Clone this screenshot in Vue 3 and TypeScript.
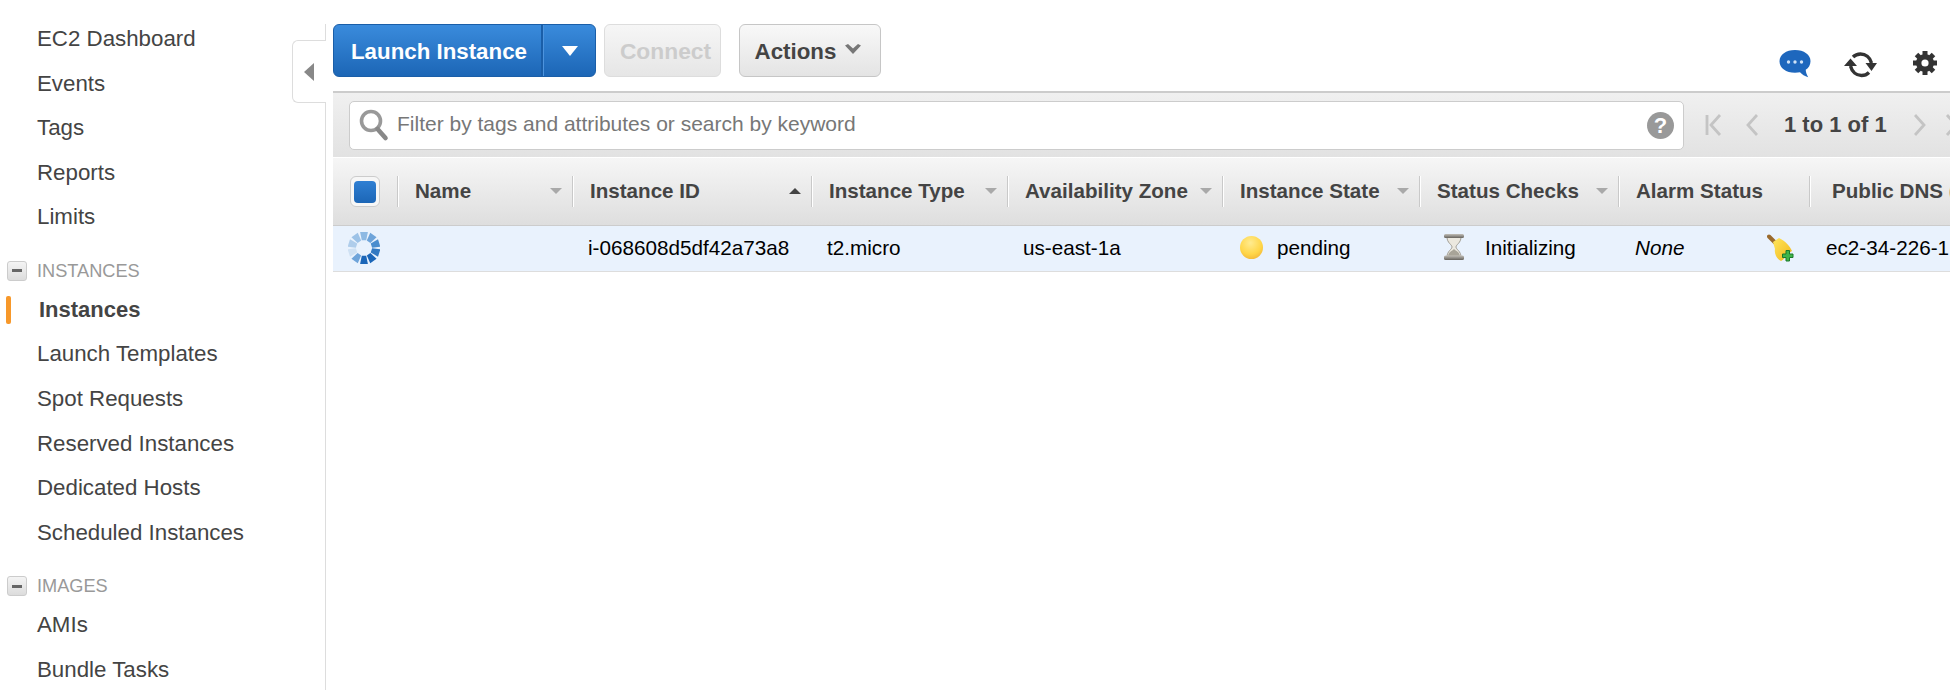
<template>
  <div class="console">
    <aside class="sidebar">
      <nav class="nav">
        <a v-for="item in topLinks" :key="item" class="nav-item">{{ item }}</a>
        <template v-for="group in groups" :key="group.title">
          <div class="nav-head">
            <span class="minus"><i></i></span>
            {{ group.title }}
          </div>
          <a
            v-for="item in group.items"
            :key="item"
            class="nav-item"
            :class="{ active: item === 'Instances' }"
          >{{ item }}</a>
        </template>
      </nav>
      <div class="collapse-tab"><i></i></div>
    </aside>

    <main class="main">
      <div class="actions">
        <button class="btn primary">
          <span class="primary-label">Launch Instance</span>
          <span class="primary-caret"><i></i></span>
        </button>
        <button class="btn disabled">Connect</button>
        <button class="btn plain">
          Actions
          <svg width="16" height="11" viewBox="0 0 16 11"><path d="M0 1.500L3 0l5 4.500L13 0l3 1.500L8 10z" fill="#777" /></svg>
        </button>

        <div class="tools">
          <svg class="chat" width="32" height="28" viewBox="0 0 32 28">
            <path d="M16 0c9 0 15.500 4.700 15.500 11.200 0 3.600-1.800 6.600-4.800 8.600.2 2.600 1 4.900 2.500 7.400-3.500-1-6.200-2.600-8.200-4.900-1.500.3-3.100.4-5 .4C7 22.700.5 18 .5 11.200.5 4.700 7 0 16 0z" fill="#1e67bd" />
            <circle cx="9.500" cy="12" r="1.700" fill="#cfe2f7" />
            <circle cx="16" cy="12" r="1.700" fill="#cfe2f7" />
            <circle cx="22.500" cy="12" r="1.700" fill="#cfe2f7" />
          </svg>
          <svg class="refresh" width="33" height="26" viewBox="0 0 33 26">
            <path d="M6.500 14c1.500 6 6 9.500 11 9.500 3 0 5.500-1 7.500-3M27.500 11c-1.500-6-6-9-11-9-3 0-5.500 1-7.500 3" fill="none" stroke="#333" stroke-width="3.400" />
            <path d="M0 14h13L6.500 6.500zM21.500 11h11.500L27.500 19z" fill="#333" />
          </svg>
          <svg class="gear" width="26" height="26" viewBox="0 0 26 26">
            <line
              v-for="a in [0, 45, 90, 135]"
              :key="a"
              x1="13"
              y1="1"
              x2="13"
              y2="25"
              stroke="#333"
              stroke-width="5"
              :transform="`rotate(${a} 13 13)`"
            />
            <circle cx="13" cy="13" r="9" fill="#333" />
            <circle cx="13" cy="13" r="3.600" fill="#fff" />
          </svg>
        </div>
      </div>

      <div class="filter-bar">
        <div class="search">
          <svg width="30" height="34" viewBox="0 0 30 34">
            <circle cx="12" cy="13" r="9.500" fill="#fff" stroke="#999" stroke-width="3.600" />
            <path d="M18.500 21l8 9" stroke="#888" stroke-width="4.600" stroke-linecap="round" />
          </svg>
          <span class="search-text">Filter by tags and attributes or search by keyword</span>
          <span class="help">?</span>
        </div>
        <div class="pager">
          <svg width="17" height="22" viewBox="0 0 17 22"><path d="M2 1v20M15 1L6 11l9 10" fill="none" stroke="#c4c4c4" stroke-width="2.800" /></svg>
          <svg class="prev" width="12" height="22" viewBox="0 0 12 22"><path d="M11 1L2 11l9 10" fill="none" stroke="#c4c4c4" stroke-width="2.800" /></svg>
          <span class="pager-text">1 to 1 of 1</span>
          <svg class="next" width="12" height="22" viewBox="0 0 12 22"><path d="M1 1l9 10-9 10" fill="none" stroke="#c4c4c4" stroke-width="2.800" /></svg>
          <svg class="last" width="17" height="22" viewBox="0 0 17 22"><path d="M2 1l9 10-9 10M15 1v20" fill="none" stroke="#c4c4c4" stroke-width="2.800" /></svg>
        </div>
      </div>

      <div class="grid head">
        <div class="check-cell"><span class="check"><i></i></span></div>
        <div v-for="col in columns" :key="col.label" class="th" :class="{ wide: col.label === 'Public DNS (IPv4)' }">
          <span class="th-label">{{ col.label }}</span>
          <span v-if="col.sort" class="sort" :class="col.sort"></span>
        </div>
      </div>

      <div class="grid row">
        <div class="spin-cell">
          <svg width="32" height="32" viewBox="-16 -16 32 32">
            <path
              v-for="(color, i) in spinner"
              :key="i"
              d="M-3.900 -16L3.900 -16L2.200 -7.800L-2.200 -7.800Z"
              :fill="color"
              :transform="`rotate(${i * 36})`"
            />
          </svg>
        </div>
        <div class="td"></div>
        <div class="td">i-068608d5df42a73a8</div>
        <div class="td">t2.micro</div>
        <div class="td">us-east-1a</div>
        <div class="td state">
          <span class="ball"></span>
          pending
        </div>
        <div class="td status">
          <svg width="22" height="26" viewBox="0 0 22 26">
            <defs>
              <linearGradient id="cap" x1="0" y1="0" x2="0" y2="1">
                <stop offset="0" stop-color="#c2bfb8" />
                <stop offset="1" stop-color="#66635d" />
              </linearGradient>
            </defs>
            <path d="M4 3c0 6 5 7.500 5 10s-5 4-5 10h14c0-6-5-7.500-5-10s5-4 5-10z" fill="#ebe8df" stroke="#a09d94" stroke-width="1" />
            <path d="M5 22c.5-4 4-5 6-7 2 2 5.500 3 6 7z" fill="#a8a498" />
            <rect x="1" y="0" width="20" height="4" rx="1.500" fill="url(#cap)" />
            <rect x="1" y="21.500" width="20" height="4.500" rx="1.500" fill="url(#cap)" />
          </svg>
          Initializing
        </div>
        <div class="td alarm">
          <em>None</em>
          <svg class="broom" width="29" height="28" viewBox="0 0 29 28">
            <defs>
              <linearGradient id="bell" x1="0" y1="0" x2="1" y2="1">
                <stop offset="0" stop-color="#ffe65c" />
                <stop offset="0.7" stop-color="#f5c52e" />
                <stop offset="1" stop-color="#c98f1c" />
              </linearGradient>
            </defs>
            <path d="M2 2.500l6 6" stroke="#9a6a2c" stroke-width="4" stroke-linecap="round" />
            <path d="M6 8l6-4c6 3 11 8 13 13-5 3-7 8-11 10-4-2-7-7-6-12z" fill="url(#bell)" />
            <path d="M19 16.500h3.500v3.500h3.500v3.500h-3.500v3.500h-3.500v-3.500h-3.500v-3.500h3.500z" fill="#3fb54a" stroke="#1d7a2a" stroke-width="1" />
          </svg>
        </div>
        <div class="td dns">ec2-34-226-1</div>
      </div>
    </main>
  </div>
</template>

<script setup lang="ts">
interface Column {
  label: string
  sort?: 'down' | 'up'
}

const topLinks = ['EC2 Dashboard', 'Events', 'Tags', 'Reports', 'Limits']

const groups = [
  {
    title: 'INSTANCES',
    items: ['Instances', 'Launch Templates', 'Spot Requests', 'Reserved Instances', 'Dedicated Hosts', 'Scheduled Instances'],
  },
  { title: 'IMAGES', items: ['AMIs', 'Bundle Tasks'] },
]

const columns: Column[] = [
  { label: 'Name', sort: 'down' },
  { label: 'Instance ID', sort: 'up' },
  { label: 'Instance Type', sort: 'down' },
  { label: 'Availability Zone', sort: 'down' },
  { label: 'Instance State', sort: 'down' },
  { label: 'Status Checks', sort: 'down' },
  { label: 'Alarm Status' },
  { label: 'Public DNS (IPv4)' },
]

// clockwise from the top, the tail of the spinner fades out on the left
const spinner = ['#8db9e3', '#6ea4da', '#4a8dce', '#3279c2', '#1b66b8', '#1b66b8', '#6ea4da', '#cfe1f3', '#afcdeb', '#9cc2e7']
</script>

<style>
html,
body {
  overflow: hidden;
  background: #fff;
}
</style>

<style scoped>
.console {
  display: flex;
  height: 690px;
  width: 1950px;
  overflow: hidden;
  font-family: "Liberation Sans", Arial, sans-serif;
  color: #444;
  background: #fff;
}

.sidebar {
  position: relative;
  flex: none;
  width: 326px;
  box-sizing: border-box;
  margin-top: 24px;
  border-right: 1px solid #ddd;
}

.nav {
  display: flex;
  flex-direction: column;
  padding: 1px 0 0 37px;
}

.nav-item {
  position: relative;
  height: 28px;
  line-height: 28px;
  margin-bottom: 16.600px;
  font-size: 22.300px;
  white-space: nowrap;
}

.nav-item.active {
  font-weight: bold;
  font-size: 22px;
  padding-left: 2px;
}

.nav-item.active::before {
  content: "";
  position: absolute;
  left: -31px;
  top: 0;
  width: 5px;
  height: 28px;
  border-radius: 2px;
  background: #f7982a;
}

.nav-head {
  position: relative;
  height: 28px;
  line-height: 28px;
  margin: 8.900px 0 11px;
  font-size: 18.200px;
  color: #999;
}

.minus {
  position: absolute;
  left: -30px;
  top: 4px;
  width: 18px;
  height: 18px;
  border: 1px solid #ccc;
  border-radius: 3px;
  background: linear-gradient(#f4f4f4, #dcdcdc);
  display: flex;
  align-items: center;
  justify-content: center;
}

.minus i {
  width: 10px;
  height: 3px;
  background: #666;
}

.collapse-tab {
  position: absolute;
  left: 292px;
  top: 16px;
  width: 34px;
  height: 63px;
  box-sizing: border-box;
  border: 1px solid #ddd;
  border-right: 0;
  border-radius: 6px 0 0 6px;
  background: #fff;
  display: flex;
  align-items: center;
  padding-left: 11px;
}

.collapse-tab i {
  border-style: solid;
  border-width: 9px 10px 9px 0;
  border-color: transparent #888 transparent transparent;
}

.main {
  flex: 1;
  min-width: 0;
  padding-left: 7px;
  overflow: hidden;
}

.actions {
  display: flex;
  height: 91px;
  box-sizing: border-box;
  padding-top: 24px;
  gap: 8px;
}

.btn {
  height: 53px;
  box-sizing: border-box;
  border-radius: 6px;
  font-family: inherit;
  font-size: 22.300px;
  font-weight: bold;
  padding: 2px 0 0;
  display: flex;
  align-items: center;
}

.primary {
  width: 263px;
  padding: 0;
  border: 1px solid #1a5ea8;
  background: linear-gradient(#3a8bdc, #1c66b6);
  color: #fff;
}

.primary-label {
  width: 209px;
  height: 100%;
  line-height: 53px;
  text-align: left;
  padding-left: 17px;
  box-sizing: border-box;
  border-right: 2px solid #1a5ea8;
}

.primary-caret {
  flex: 1;
  height: 100%;
  display: flex;
  align-items: center;
  justify-content: center;
  border-left: 1px solid #4d94de;
}

.primary-caret i {
  border-style: solid;
  border-width: 10px 8.500px 0;
  border-color: #fff transparent transparent;
}

.disabled {
  width: 117px;
  justify-content: center;
  padding-left: 6px;
  border: 1px solid #ddd;
  background: linear-gradient(#f6f6f6, #e6e6e6);
  color: #ccc;
  font-size: 22.800px;
}

.plain {
  width: 142px;
  margin-left: 10px;
  padding-right: 4px;
  justify-content: center;
  gap: 9px;
  border: 1px solid #c6c6c6;
  background: linear-gradient(#f8f8f8, #e4e4e4);
  color: #444;
}

.plain svg {
  position: relative;
  top: -2px;
}

.tools {
  margin-left: auto;
  display: flex;
  align-items: flex-start;
  padding-top: 26px;
}

.chat {
  margin-right: 33px;
}

.refresh {
  margin-top: 2px;
  margin-right: 35px;
}

.gear {
  margin-right: 12px;
}

.filter-bar {
  display: flex;
  align-items: center;
  height: 66px;
  box-sizing: border-box;
  border-top: 2px solid #ccc;
  background: linear-gradient(#f0f0f0, #e2e2e2);
  padding-left: 16px;
}

.search {
  flex: none;
  width: 1335px;
  height: 49px;
  box-sizing: border-box;
  display: flex;
  align-items: center;
  padding: 0 9px 0 9px;
  background: #fff;
  border: 1px solid #ccc;
  border-radius: 5px;
}

.search-text {
  flex: 1;
  margin: 0 0 2px 8px;
  font-size: 21px;
  color: #777;
}

.help {
  width: 27px;
  height: 27px;
  border-radius: 50%;
  background: #999;
  color: #fff;
  font-size: 22px;
  font-weight: bold;
  line-height: 27px;
  text-align: center;
}

.pager {
  flex: none;
  display: flex;
  align-items: center;
  margin-left: 21px;
}

.prev {
  margin-left: 24px;
}

.pager-text {
  margin-left: 26px;
  font-size: 22px;
  font-weight: bold;
  white-space: nowrap;
}

.next {
  margin-left: 27px;
}

.last {
  margin-left: 19px;
}

.grid {
  display: grid;
  grid-template-columns: 64px 175px 239px 196px 215px 197px 199px 191px 220px;
  align-items: center;
}

.head {
  height: 69px;
  border-top: 1px solid #fff;
  border-bottom: 1px solid #ccc;
  box-sizing: border-box;
  background: linear-gradient(#f6f6f6, #dedede);
}

.check-cell {
  padding-left: 17px;
}

.check {
  display: flex;
  align-items: center;
  justify-content: center;
  width: 30px;
  height: 31px;
  box-sizing: border-box;
  border: 1px solid #ccc;
  border-radius: 6px;
  background: #f6f6f6;
}

.check i {
  width: 22px;
  height: 22px;
  border-radius: 4px;
  background: linear-gradient(#2f7fd3, #1c66b6);
}

.th {
  display: flex;
  align-items: center;
  justify-content: space-between;
  height: 31px;
  box-sizing: border-box;
  padding: 0 10px 2px 17px;
  border-left: 1px solid #c9c9c9;
  box-shadow: inset 1px 0 0 #fff;
  font-size: 20.600px;
  font-weight: bold;
  white-space: nowrap;
}

.th.wide {
  padding-left: 22px;
}

.sort {
  border-style: solid;
  border-color: #999 transparent;
}

.sort.down {
  border-width: 6px 6px 0;
  opacity: 0.8;
}

.sort.up {
  border-width: 0 6px 6px;
  border-color: #444 transparent;
}

.row {
  height: 46px;
  padding-bottom: 2px;
  background: #e9f2fd;
  border-bottom: 1px solid #ddd;
  box-sizing: border-box;
  color: #000;
  font-size: 20.700px;
}

.spin-cell {
  padding-left: 15px;
  display: flex;
}

.td {
  padding-left: 16px;
  display: flex;
  align-items: center;
  white-space: nowrap;
}

.ball {
  flex: none;
  width: 23px;
  height: 23px;
  border-radius: 50%;
  margin: 0 14px 0 2px;
  background: radial-gradient(circle at 45% 30%, #ffeb90, #ffd648 55%, #eca52e);
}

.status svg {
  flex: none;
  margin: 0 20px 0 8px;
  position: relative;
  top: -1px;
}

.alarm {
  justify-content: space-between;
  padding-left: 17px;
  padding-right: 13px;
}

.broom {
  flex: none;
}

.dns {
  padding-left: 17px;
}
</style>
